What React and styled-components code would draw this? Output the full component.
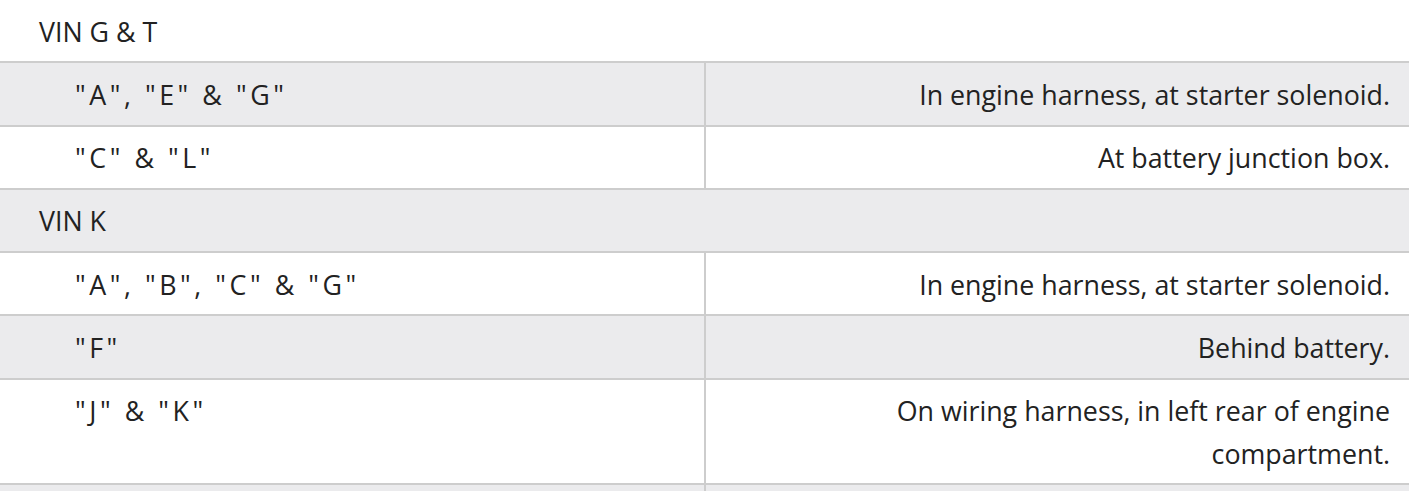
import React from 'react';
import styled, { createGlobalStyle } from 'styled-components';

const GlobalStyle = createGlobalStyle`
    html, body {
        margin: 0;
        padding: 0;
        background: #fff;
        overflow: hidden;
    }
    body {
        font-family: "Open Sans", "Noto Sans", sans-serif;
        color: #222;
    }
`

const Table = styled.table`
    width: 1409px;
    border-collapse: collapse;
    table-layout: fixed;
    font-size: 26.8px;
`

const Row = styled.tr`
    background: ${props => props.$shade ? '#ebebed' : '#fff'};
    border-bottom: 2px solid #cdcdcd;
`

const GroupCell = styled.td`
    padding: 10.5px 39px 8.4px;
    line-height: 42.4px;
    height: 42.4px;
`

const CodeCell = styled.td`
    width: 630px;
    padding: 10.5px 0 8.4px 75px;
    line-height: 42.4px;
    vertical-align: top;
    letter-spacing: 3.55px;
    border-right: 2px solid #cdcdcd;
`

const PlaceCell = styled.td`
    padding: 10.5px 19px 8.4px 20px;
    line-height: 42.4px;
    text-align: right;
    vertical-align: top;
`

const groups = [
    {
        name: 'VIN G & T',
        rows: [
            ['"A", "E" & "G"', 'In engine harness, at starter solenoid.'],
            ['"C" & "L"', 'At battery junction box.'],
        ],
    },
    {
        name: 'VIN K',
        rows: [
            ['"A", "B", "C" & "G"', 'In engine harness, at starter solenoid.'],
            ['"F"', 'Behind battery.'],
            ['"J" & "K"', 'On wiring harness, in left rear of engine compartment.'],
            ['\u00a0', '\u00a0'],
        ],
    },
];

export default function App() {
    let idx = 0;
    return (
        <>
            <GlobalStyle />
            <Table>
                <tbody>
                    {groups.map((g) => {
                        const out = [];
                        out.push(
                            <Row key={'g' + idx} $shade={idx % 2 === 1}>
                                <GroupCell colSpan={2}>{g.name}</GroupCell>
                            </Row>
                        );
                        idx++;
                        g.rows.forEach((r) => {
                            out.push(
                                <Row key={'r' + idx} $shade={idx % 2 === 1}>
                                    <CodeCell>{r[0]}</CodeCell>
                                    <PlaceCell>{r[1]}</PlaceCell>
                                </Row>
                            );
                            idx++;
                        });
                        return out;
                    })}
                </tbody>
            </Table>
        </>
    );
}
